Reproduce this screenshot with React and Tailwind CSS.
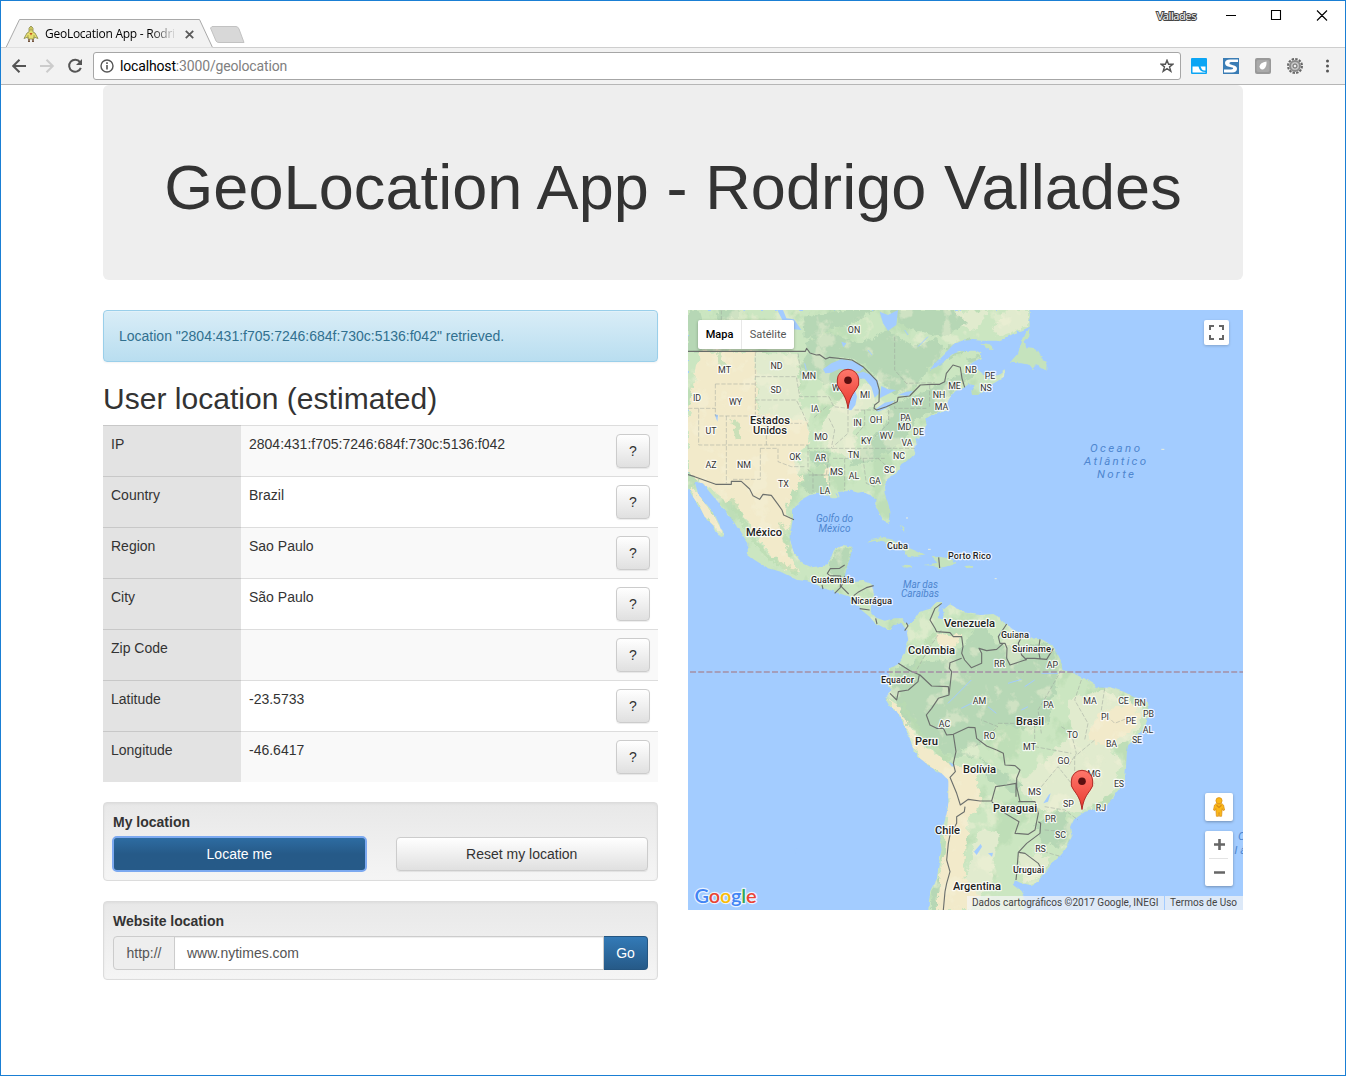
import React from "react";

const rows = [
  ["IP", "2804:431:f705:7246:684f:730c:5136:f042"],
  ["Country", "Brazil"],
  ["Region", "Sao Paulo"],
  ["City", "São Paulo"],
  ["Zip Code", ""],
  ["Latitude", "-23.5733"],
  ["Longitude", "-46.6417"],
];

// Each entry: label, centre x, baseline y (map pixels)
const states = [
  ["ON", 166, 22.5], ["MT", 36.5, 62.5], ["ND", 88.5, 58.5], ["MN", 121, 68.5], ["SD", 88, 82.5],
  ["ID", 9, 90.5], ["WY", 47.5, 94.5], ["WI", 149, 80.5], ["MI", 177, 87.5], ["IA", 127, 101.5],
  ["NB", 283, 62.5], ["PE", 302, 68.5], ["NS", 298, 80.5], ["ME", 266.5, 78.5], ["NH", 251, 87.5],
  ["NY", 229.5, 94.5], ["MA", 253.5, 99.5], ["UT", 23, 123.5], ["IN", 169.5, 115.5], ["OH", 188, 112.5],
  ["PA", 217.5, 110.5], ["MD", 216.5, 119.5], ["DE", 230.5, 124.5], ["MO", 133, 129.5], ["KY", 178.5, 133.5],
  ["WV", 198.5, 128.5], ["VA", 219, 135.5], ["AZ", 23, 157.5], ["NM", 56, 157.5], ["OK", 107, 149.5],
  ["AR", 132.5, 150.5], ["TN", 165.5, 147.5], ["NC", 211, 148.5], ["MS", 148.5, 164.5], ["AL", 166, 168.5],
  ["SC", 201.5, 162.5], ["GA", 187, 173.5], ["TX", 95.5, 176.5], ["LA", 137, 183.5],
  ["RR", 311.5, 356.5], ["AP", 364.5, 357.5], ["AM", 291.5, 393.5], ["PA", 360.5, 397.5], ["MA", 402, 393.5],
  ["CE", 435.5, 393.5], ["RN", 452, 395.5], ["PI", 417, 409.5], ["PB", 460.5, 406.5], ["PE", 443, 413.5],
  ["AL", 460, 422.5], ["SE", 449, 432.5], ["AC", 256.5, 416.5], ["RO", 301.5, 428.5], ["TO", 384.5, 427.5],
  ["MT", 341.5, 439.5], ["BA", 423.5, 436.5], ["GO", 375.5, 453.5], ["MG", 406, 466.5], ["ES", 431, 476.5],
  ["MS", 346.5, 484.5], ["SP", 380.5, 496.5], ["RJ", 413, 500.5], ["PR", 362.5, 511.5], ["SC", 372.5, 527.5], ["RS", 352.5, 541.5],
];

// label, centre x, baseline y, rendered width, font size
const countries = [
  ["Estados", 82, 114, 40, 11.2], ["Unidos", 82, 124, 34, 11.2], ["México", 76, 226, 36, 11.2],
  ["Cuba", 209.5, 239, 21, 9.3], ["Porto Rico", 281.5, 249, 43, 9.3], ["Guatemala", 144.5, 273, 43, 9.3],
  ["Nicarágua", 183.5, 294, 41, 9.3], ["Venezuela", 281.5, 317, 51, 11.2], ["Guiana", 327, 328, 28, 9.3],
  ["Suriname", 343.5, 342, 39, 9.3], ["Colômbia", 243.5, 344, 47, 11.2], ["Equador", 209.5, 373, 33, 9.3],
  ["Brasil", 342, 415, 28, 11.2], ["Peru", 238.5, 435, 23, 11.2], ["Bolívia", 291.5, 463, 33, 11.2],
  ["Paraguai", 327, 502, 44, 11.2], ["Chile", 259.5, 524, 25, 11.2], ["Uruguai", 340.5, 563, 31, 9.3],
  ["Argentina", 289, 580, 48, 11.2],
];

const seas = [
  ["Golfo do", 146.5, 211.5, 37, 10], ["México", 146.5, 221.5, 32, 10],
  ["Mar das", 232.5, 277.5, 35, 10], ["Caraíbas", 232, 286.5, 38, 10],
  ["Oceano", 427, 142, 50, 11.5], ["Atlântico", 427, 155, 62, 11.5], ["Norte", 427.5, 168, 37, 11.5],
  ["O", 554, 530, 8, 11.5], ["lân", 557, 544, 21, 11.5],
];

const LAND =
  "M0 0H1025V50L1005 60 975 72 950 85 930 92 880 92 850 90 822 92 800 100 770 130 740 160 725 180 745 172 780 145 800 130 830 122 865 122 880 130 878 145 850 158 835 172 865 175 885 192 905 205 935 192 950 180 948 200 925 215 900 230 870 255 852 254 850 243 860 226 843 222 825 235 800 245 785 265 775 285 785 300 770 303 745 312 712 325 715 340 700 370 692 390 685 380 688 400 680 415 685 430 665 450 640 465 625 490 600 505 588 530 590 550 600 580 607 605 605 635 597 640 580 620 565 590 565 570 545 555 525 545 510 548 490 542 450 546 455 562 435 562 420 555 395 550 365 555 345 566 335 572 315 600 315 628 308 660 308 700 320 735 345 760 370 772 400 768 420 762 432 735 440 715 465 708 495 713 488 740 478 765 472 790 468 808 490 815 520 810 555 825 556 850 550 880 548 905 565 923 590 932 620 925 645 925 660 945 676 935 696 905 731 895 746 876 761 876 752 896 750 925 768 928 765 900 786 883 816 900 836 910 876 915 916 912 931 920 941 935 966 950 996 975 1026 985 1061 988 1091 1005 1104 1025 1121 1060 1123 1080 1156 1090 1196 1110 1226 1130 1266 1132 1306 1145 1346 1165 1376 1175 1384 1210 1371 1250 1346 1280 1321 1305 1316 1330 1314 1370 1311 1410 1296 1430 1281 1450 1266 1475 1246 1495 1216 1500 1191 1505 1156 1530 1146 1550 1151 1580 1136 1610 1116 1635 1091 1660 1066 1690 1051 1715 1026 1725 996 1718 981 1710 976 1725 1006 1750 1011 1770 1006 1800H721L723 1770 731 1740 746 1710 751 1670 761 1620 756 1580 771 1530 781 1480 781 1410 761 1390 726 1370 696 1345 676 1320 671 1300 656 1265 636 1215 606 1190 591 1165 601 1150 611 1140 600 1125 604 1100 606 1075 631 1060 651 1030 661 990 656 962 640 938 618 945 606 960 585 952 560 938 545 920 520 900 510 888 490 865 478 858 440 845 405 835 370 815 330 810 290 790 240 775 200 750 180 735 178 700 165 680 140 640 110 600 80 565 60 540 45 520 20 515 30 550 50 580 75 610 95 650 108 668 106 682 90 675 75 645 50 620 35 590 15 560 0 535Z";

const ISLANDS = [
  "M965 158 990 130 1000 100 1015 65 1028 57 1025 75 1010 95 1015 115 1045 118 1055 135 1062 150 1076 155 1075 180 1058 178 1050 162 1035 178 1025 165 1000 160Z",
  "M535 698 550 686 580 682 615 690 640 705 665 715 690 725 712 735 690 740 660 738 650 722 610 712 590 697 560 693Z",
  "M728 742 755 740 785 745 808 760 780 768 755 775 735 768 710 765 745 758Z",
  "M830 768 855 766 855 773 832 774Z",
  "M640 767 665 768 673 773 655 776Z",
  "M880 98 905 103 921 118 905 120Z",
  "M638 645 652 655 651 667 643 655Z",
];

const FOREST = [
  "M355 95 430 70 520 100 600 60 680 110 740 85 770 120 720 180 690 225 620 250 575 210 530 165 470 145 420 145 365 130Z",
  "M345 20 470 0H560L500 40 430 55 380 90 350 80Z M610 0H800L840 40 760 80 680 60 630 40Z",
  "M0 0H35L60 90 40 125H0Z M85 0H150V28H90Z",
  "M360 130 470 150 540 190 520 210 470 200 440 230 370 200 340 165Z",
  "M600 290 730 235 800 200 830 185 860 190 780 260 740 310 690 325 640 400 560 450 490 470 500 430 570 370 600 330Z",
  "M345 490 410 500 430 550 370 552 340 530Z M360 420 430 425 420 470 370 460Z",
  "M430 750 445 715 492 715 470 800 425 810Z",
  "M770 110 850 85 840 120 780 145Z M830 150 880 140 860 170Z",
  "M625 1075 680 1055 780 1050 830 1000 870 950 900 960 920 1000 1000 1010 1080 1000 1115 1070 1100 1150 1080 1240 1010 1260 930 1240 880 1300 800 1320 720 1300 650 1230 610 1140Z",
  "M650 1270 720 1300 800 1310 870 1340 950 1390 1000 1420 980 1450 900 1410 880 1340 790 1340 740 1310Z",
  "M1090 1510 1130 1500 1150 1560 1120 1610 1060 1600 1040 1540Z",
  "M720 1800 735 1740 755 1690 750 1760 745 1800Z",
];

const PALE = [
  "M35 125 200 125 210 310 360 340 360 405 310 440 340 500 290 600 310 630 290 680 300 740 340 790 290 780 220 700 190 640 140 590 60 535 0 490V320L20 200Z",
  "M15 535 45 570 80 620 105 672 80 650 40 600 10 560Z",
  "M596 1160 640 1195 690 1290 780 1360 860 1370 880 1480 840 1530 830 1700 870 1750 850 1800H745L752 1720 770 1610 780 1490 776 1410 690 1340 660 1260Z",
  "M1230 1210 1330 1180 1360 1220 1330 1260 1260 1310 1200 1290Z",
  "M415 460 432 470 415 540 400 535Z",
  "M925 1003 958 1003 955 1040 935 1035Z",
  "M745 968 820 975 805 1005 760 1015Z",
];

const MEADOW = [
  "M200 128 330 132 340 300 365 350 360 405 325 440 340 500 290 590 300 480 240 440 215 330Z",
  "M720 5 900 0 870 60 790 50Z M960 0H1020V50L930 80 910 50Z",
  "M1040 1380 1150 1270 1250 1300 1300 1360 1280 1440 1180 1510 1060 1500 990 1430Z",
  "M1140 1170 1240 1140 1370 1200 1340 1280 1240 1330 1150 1280Z",
  "M870 1560 930 1570 910 1710 870 1770 830 1720Z",
  "M990 1630 1090 1640 1070 1690 1010 1720Z",
  "M520 230 560 220 560 290 500 310 500 450 430 420 400 360 430 290Z",
];

const BORDERS = [
  "M0 124H352L356 115 366 129 385 135 395 134 413 147 425 142 470 147 492 150 525 170 545 190 566 212 574 240 573 275 560 285 558 295 566 300 595 290 628 275 630 262 665 258 697 225 730 223H755L770 215 775 190 795 165 817 172 822 205 830 232",
  "M0 494 20 500 83 523H130V514H160L185 537 195 557 215 568 225 553 250 556 270 583 282 600 287 615 318 629",
  "M470 765 455 775 427 776 418 790 425 797 458 798 457 833 440 850 M470 798 460 830 482 852 M402 825 405 837 M557 827 535 833 510 847 497 857 M515 896 545 900 M563 925 567 942 M655 938 660 948 650 962",
  "M761 880 741 895 726 930 741 955 746 965 786 968 796 980 821 980 825 1010 821 1030 830 1050 850 1073 881 1060 881 1030 873 1015 896 1022 926 1018 946 1000",
  "M956 942 931 980 936 1000 951 1000 957 1015 956 1045 966 1065 1011 1050 1016 1045 1040 1045 1076 1048 1096 1015 M1016 1050 1001 1035 991 1000 1001 980 M1056 1045 1051 1020 1056 988",
  "M821 1045 786 1058 784 1075 791 1085 783 1155 751 1165 731 1195 715 1215 726 1245 746 1255 766 1255 776 1275 796 1273 841 1252 861 1253 866 1285 896 1308 926 1320 M631 1060 666 1082 696 1095 731 1128 781 1130 783 1155 M694 1093 690 1115 661 1140 631 1145 626 1170 606 1150",
  "M796 1273 804 1325 796 1360 802 1385 786 1402 806 1450 817 1485 841 1468 876 1473 911 1473 923 1430 956 1425 984 1420 984 1460 M926 1320 946 1330 951 1365 981 1367 996 1380 986 1405 986 1430 996 1475",
  "M831 1490 829 1505 806 1520 806 1540 786 1575 781 1600 776 1650 786 1685 776 1720 771 1745 766 1800 M911 1475 951 1510 993 1535 981 1570 1021 1573 1041 1560 1051 1510 1041 1475 991 1475 M1051 1535 1058 1540 1056 1570 1016 1600 991 1627 986 1690 984 1710 M993 1627 1011 1630 1051 1660 1066 1690",
  "M752 742 755 774",
];

const DIVISIONS =
  "M100 0V55M202 125V318M202 200H325L335 260H423M82 222H202M82 222V318H235V405M32 295V405H360M0 295H82M115 318V520M217 415V508H130M217 415H270V455L310 470H350M202 270H325L345 310 362 350M360 405V480L375 490V545M265 340H340M360 415H435M423 260 437 290 480 295M423 325 440 360 430 415M480 300V370L435 410M530 300V345L500 380M500 300H560M602 300V340L560 380M620 270V295H715M435 415H680M435 445H590M422 445 415 495H360M470 445V540M525 445 535 520 560 530M375 495H425V530M570 445 620 490M725 225V290M620 80V180L655 220 740 218M330 130 340 200M415 290 375 325M1120 1080 1080 1150 1050 1200 1060 1270M930 1240H1040V1310L1150 1330M1120 1250 1150 1270 1165 1330 1140 1370M1180 1110 1160 1170 1200 1240 1190 1290M1250 1135 1240 1200 1280 1240 1330 1220M1220 1290 1160 1340 1160 1400 1220 1420M1060 1430 1110 1370 1150 1420 1200 1430M1070 1490 1130 1500 1170 1530M1070 1560 1140 1565M1050 1620 1120 1640M760 960 720 1020 680 1090M860 1310 930 1250 880 1230";

const LAKES = [
  "M405 178 430 160 460 148 495 153 528 172 515 185 485 180 455 176 430 188 412 190Z",
  "M482 300 477 270 484 232 500 210 515 202 498 230 507 260 502 285 490 301Z",
  "M525 185 550 195 570 212 573 250 560 263 550 230 530 206 510 205 495 195Z",
  "M562 298 590 278 620 272 595 295 570 305Z",
  "M580 228 600 238 625 240 600 252 575 265Z",
  "M630 255 655 245 675 243 660 258Z",
  "M575 5 600 15 630 0 625 45 600 62 585 40Z",
  "M268 0 285 0 295 25 318 28 340 60 318 58 310 40 288 40Z",
  "M318 1620 330 1610 322 1632Z",
  "M858 1625 878 1602 882 1610 866 1635Z M900 1630 915 1628 912 1640Z",
  "M783 1355 800 1365 792 1371Z",
  "M460 95 475 100 466 112Z M985 60 1000 70 990 77Z",
  "M80 313 90 315 88 335Z M1088 1450 1080 1475 1066 1480 1082 1455Z",
];

function Pin({ x, y }) {
  return (
    <g transform={`translate(${x} ${y})`}>
      <path d="M0 0C-1.4-10-4.6-14.5-8.2-19.3A10.7 10.7 0 0 1-10.7-28.5 10.7 10.7 0 0 1 10.7-28.5 10.7 10.7 0 0 1 8.2-19.3C4.6-14.5 1.4-10 0 0Z" fill="url(#pin)" stroke="#b02a25" strokeWidth="1" />
      <circle cx="0" cy="-28.3" r="3.8" fill="#5a0f10" />
    </g>
  );
}

function GeoMap() {
  return (
    <div className="relative h-[600px] w-[555px] overflow-hidden bg-[#a3ccff] font-['Roboto',sans-serif]">
      <svg className="block" width="555" height="600" viewBox="0 0 555 600">
        <defs>
          <linearGradient id="pin" x1="0" y1="0" x2="0" y2="1">
            <stop offset="0" stopColor="#ff776b" />
            <stop offset="1" stopColor="#e8392f" />
          </linearGradient>
          <clipPath id="landClip"><path d={LAND} /></clipPath>
          <filter id="coast" x="-5%" y="-5%" width="110%" height="110%" colorInterpolationFilters="sRGB">
            <feTurbulence type="fractalNoise" baseFrequency="0.12" numOctaves="3" seed="4" />
            <feDisplacementMap in="SourceGraphic" scale="4" xChannelSelector="R" yChannelSelector="G" />
          </filter>
          <filter id="rough" x="-20%" y="-20%" width="140%" height="140%" colorInterpolationFilters="sRGB">
            <feTurbulence type="fractalNoise" baseFrequency="0.05" numOctaves="4" seed="9" />
            <feDisplacementMap in="SourceGraphic" scale="26" xChannelSelector="R" yChannelSelector="G" />
          </filter>
          <filter id="reliefDark" x="0" y="0" width="100%" height="100%" colorInterpolationFilters="sRGB">
            <feTurbulence type="fractalNoise" baseFrequency="0.011 0.009" numOctaves="5" seed="21" />
            <feColorMatrix values="0 0 0 0 0.69  0 0 0 0 0.84  0 0 0 0 0.67  0 9 0 0 -4.9" />
          </filter>
          <filter id="reliefLight" x="0" y="0" width="100%" height="100%" colorInterpolationFilters="sRGB">
            <feTurbulence type="fractalNoise" baseFrequency="0.016" numOctaves="5" seed="33" />
            <feColorMatrix values="0 0 0 0 0.96  0 0 0 0 0.95  0 0 0 0 0.85  9 0 0 0 -5.2" />
          </filter>
        </defs>
        <g filter="url(#coast)">
          <g transform="scale(0.333333)">
            <path d={LAND} fill="#cbe6c1" />
            {ISLANDS.map((d) => <path key={d} d={d} fill="#c5e3bd" />)}
          </g>
        </g>
        <g transform="scale(0.333333)">
          <g clipPath="url(#landClip)">
            <rect width="1665" height="1800" filter="url(#reliefDark)" opacity="0.45" />
            <g filter="url(#rough)">
              {MEADOW.map((d) => <path key={d} d={d} fill="#e1ebce" />)}
              {PALE.map((d) => <path key={d} d={d} fill="#f2eaca" />)}
              {FOREST.map((d) => <path key={d} d={d} fill="#b6d7b5" />)}
            </g>
            <rect width="1665" height="1800" filter="url(#reliefLight)" opacity="0.4" />
            <path d="M130 570 190 680 240 740 330 790M280 640 310 740M90 130 110 180M660 1130 720 1000 740 970M640 1180 700 1280 780 1350M140 330 150 390" fill="none" stroke="#b9dcb1" strokeWidth="14" opacity="0.7" filter="url(#rough)" />
          </g>
          <g fill="#a3ccff">
            {LAKES.map((d) => <path key={d} d={d} />)}
          </g>
          <path d="M1010 1130 1040 1110M900 1190 925 1210M780 1180 850 1110M960 1120 1000 1108M1060 1090 1110 1090M1000 1200 1020 1190M820 1195 860 1175M350 160 355 180M690 110 720 80M540 120 552 135M650 60 660 75M450 560 444 550" stroke="#a3ccff" strokeWidth="3" fill="none" />
          <path d="M1420 418h9M654 624h6M720 718h8M920 806h6" stroke="#eef1dc" strokeWidth="3" />
          <path d={DIVISIONS} fill="none" stroke="#9aa09a" strokeWidth="2.4" strokeDasharray="13 5" opacity="0.6" />
          <g fill="none" stroke="#6c706d" strokeWidth="3.4" strokeLinejoin="round">
            {BORDERS.map((d) => <path key={d} d={d} />)}
          </g>
        </g>
        <path d="M2 362H555" stroke="#a58fa5" strokeWidth="1.6" strokeDasharray="6 2.2" />
        <g textAnchor="middle" fill="#333" stroke="#fff" strokeOpacity="0.8" strokeWidth="2.4" strokeLinejoin="round" style={{ paintOrder: "stroke" }}>
          <g fontSize="8.8">
            {states.map(([t, x, y], i) => <text key={i} x={x} y={y}>{t}</text>)}
          </g>
          <g fontWeight="500" fill="#222">
            {countries.map(([t, x, y, w, s]) => <text key={t + y} x={x} y={y} textLength={w} fontSize={s}>{t}</text>)}
          </g>
        </g>
        <g fill="#4e86cf" fontStyle="italic">
          {seas.map(([t, x, y, w, s]) => (
            <text key={t + y} x={x - w / 2} y={y} textLength={w} fontSize={s}>{t}</text>
          ))}
        </g>
        <Pin x={160} y={98.5} />
        <Pin x={394} y={499.5} />
        <text x="6.5" y="593" textLength="62" fontSize="20" fontFamily="Lato, sans-serif" fontWeight="600" stroke="#fff" strokeOpacity="0.75" strokeWidth="2.5" strokeLinejoin="round" style={{ paintOrder: "stroke" }}>
          <tspan fill="#4285f4">G</tspan><tspan fill="#ea4335">o</tspan><tspan fill="#fbbc05">o</tspan><tspan fill="#4285f4">g</tspan><tspan fill="#34a853">l</tspan><tspan fill="#ea4335">e</tspan>
        </text>
      </svg>
      <div className="absolute left-[10px] top-[10px] flex h-[29px] rounded-[2px] bg-white text-[11px] leading-[29px] shadow-[0_1px_3px_rgba(0,0,0,0.3)]">
        <div className="w-[43px] text-center font-medium text-black">Mapa</div>
        <div className="w-[53px] border-l border-[#e8e8e8] text-center text-[#565656]">Satélite</div>
      </div>
      <div className="absolute right-[14px] top-[10px] flex size-[25px] items-center justify-center rounded-[2px] bg-white shadow-[0_1px_3px_rgba(0,0,0,0.2)]">
        <svg width="15" height="15" viewBox="0 0 15 15" fill="none" stroke="#666" strokeWidth="2"><path d="M1 5V1H5M10 1H14V5M14 10V14H10M5 14H1V10" /></svg>
      </div>
      <div className="absolute left-[517px] top-[483px] flex size-7 items-center justify-center rounded-[2px] bg-white shadow-[0_1px_3px_rgba(0,0,0,0.3)]">
        <svg width="12" height="20" viewBox="0 0 12 20">
          <path d="M1.5 8 3 6.7H9L10.5 8 11.6 13 10 13.5 9.2 11.5 8.6 19.3H6.5L6 15.5 5.5 19.3H3.4L2.8 11.5 2 13.5.5 13Z" fill="#fbb818" stroke="#d78b16" strokeWidth=".7" />
          <path d="M3.5 8.2 6 10.5 8.5 8.2" stroke="#d78b16" fill="none" strokeWidth="1.2" />
          <circle cx="6" cy="3.7" r="3.1" fill="#fbb818" stroke="#d78b16" strokeWidth=".7" />
        </svg>
      </div>
      <div className="absolute left-[517px] top-[521px] flex h-[55px] w-7 flex-col items-center rounded-[2px] bg-white shadow-[0_1px_3px_rgba(0,0,0,0.3)]">
        <svg width="28" height="55" viewBox="0 0 28 55"><path d="M9 13.5H20M14.5 8V19M9 41.5H20" stroke="#666" strokeWidth="2.6" /><path d="M4 27.5H23" stroke="#e3e3e3" /></svg>
      </div>
      <div className="absolute bottom-0 right-0 flex h-[14px] items-center whitespace-nowrap bg-[#f5f5f5]/70 text-[10px] text-[#444]">
        <span className="w-[197px] pl-[5px]">Dados cartográficos ©2017 Google, INEGI</span>
        <span className="h-full w-px bg-[#a3ccff]" />
        <span className="w-[78px] pl-[5px]">Termos de Uso</span>
      </div>
    </div>
  );
}

function Browser() {
  return (
    <header className="h-[84px] shrink-0 border-b border-[#b6b6b6]">
      <div className="relative flex h-[46px] justify-between bg-white">
        <svg className="absolute left-0 top-0" width="1344" height="47" viewBox="1 1 1344 47">
          <path d="M1 48V47.5H6L19.5 19.5H199.5L212.5 47.5H1345V48Z" fill="#f2f2f2" stroke="#a9a9a9" />
          <path d="M1 48H1345" stroke="#f2f2f2" />
          <path d="M212 26.5H236Q238 26.5 239 29L244 42.5H219Q217 42.5 216 41L210.5 28Z" fill="#d8d8d8" stroke="#c2c2c2" />
        </svg>
        <div className="relative flex items-center pl-[22px] pt-[20px]">
          <svg width="16" height="16" viewBox="0 0 16 16">
            <path d="M6 2 8 0 10 2V6L12 7 15 12.5 11 11V13H5V11L1 12.5 4 7 6 6Z" fill="#e6df70" stroke="#88884c" strokeWidth=".8" />
            <path d="M6 13V15.5M10 13V15.5M5 15.5H7M9 15.5H11" stroke="#74553e" strokeWidth="1.4" />
            <path d="M6.5 7 8 9.5 9.5 7Z" fill="#c35525" /><path d="M8 1V4M6 4H10M5 9V12M11 9V12" stroke="#9c9a48" strokeWidth=".8" />
          </svg>
          <span className="ml-[6px] w-[132px] overflow-hidden whitespace-nowrap bg-gradient-to-r from-black from-80% to-transparent bg-clip-text font-['Open_Sans',sans-serif] text-[12px] leading-4 tracking-[-0.26px] text-transparent">GeoLocation App - Rodri</span>
          <svg className="ml-[8px]" width="9" height="9" viewBox="0 0 9 9" stroke="#5a5a5a" strokeWidth="1.8"><path d="M.8.8 8.2 8.2M8.2.8.8 8.2" /></svg>
        </div>
        <div className="relative flex h-[28px] items-center">
          <span className="mr-[30px] mt-[2px] font-['Open_Sans',sans-serif] text-[11px] leading-4 tracking-[-0.4px] text-white [paint-order:stroke] [-webkit-text-stroke:2px_#444]">Vallades</span>
          <svg width="102" height="11" viewBox="0 0 102 11" fill="none" stroke="#000"><path d="M0 5.5H10M45.5.5H54.5V9.5H45.5ZM91 .5 101 10.5M101 .5 91 10.5" strokeWidth="1.1" /></svg>
          <span className="w-[17px]" />
        </div>
      </div>
      <div className="flex h-[37px] items-center bg-[#f2f2f2] pl-[11px]">
        <svg width="72" height="16" viewBox="0 0 72 16" fill="none" strokeWidth="2">
          <path d="M14 8H1.5M7.5 1.7 1.2 8 7.5 14.3" stroke="#555" />
          <path d="M28 8H40.5M34.5 1.7 40.8 8 34.5 14.3" stroke="#ccc" />
          <path d="M68 4.2A6 6 0 1 0 68.8 9.8" stroke="#555" /><path d="M70 1V7H64Z" fill="#555" />
        </svg>
        <div className="ml-[9px] flex h-[28px] w-[1088px] items-center rounded-[3px] border border-[#a6a6a6] bg-white px-[6px]">
          <svg width="14" height="14" viewBox="0 0 14 14" fill="none" stroke="#555"><circle cx="7" cy="7" r="6" strokeWidth="1.4" /><path d="M7 6V10.5M7 3.3V5" strokeWidth="1.6" /></svg>
          <span className="ml-[6px] font-['Roboto',sans-serif] text-[14px] leading-5 tracking-[-0.16px] text-[#808080]"><span className="text-black">localhost</span>:3000/geolocation</span>
          <svg className="ml-auto" width="14" height="14" viewBox="0 0 16 16" fill="none" stroke="#555" strokeWidth="1.6"><path d="M8 1.4 9.8 6H14.8L10.9 9 12.4 14 8 11 3.6 14 5.1 9 1.2 6H6.2Z" /></svg>
        </div>
        <div className="ml-[10px] flex items-center gap-4">
          <svg width="16" height="16" viewBox="0 0 16 16"><rect width="16" height="16" rx="1" fill="#0ba5f4" /><path d="M1.5 8.5H7.5Q8.5 14 14.5 14V14.5H1.5ZM9.5 8.5H14.5V12.5Q11 12.5 10.5 10.5Z" fill="#fff" /></svg>
          <svg width="16" height="16" viewBox="0 0 16 16"><rect width="16" height="16" fill="#3b7db5" /><path d="M15 4V1.5H7Q2 1.5 2 5 2 8 6 8.8L10 9.8Q10.5 11.5 8 11.5H1V14.5H9Q14 14.5 14 10.8 14 8 10 7.2L6.5 6Q6 4 8 4Z" fill="#fff" /></svg>
          <svg width="16" height="16" viewBox="0 0 16 16"><rect width="16" height="16" rx="2" fill="#999" /><rect x="1.5" y="2" width="13" height="12" rx="2" fill="#aaa" /><path d="M11.5 3.5Q12 9 8.5 11.3 5 12 4.5 8.5 5 4.5 11.5 3.5Z" fill="#fff" /></svg>
          <svg width="16" height="16" viewBox="0 0 16 16" fill="none"><circle cx="8" cy="8" r="7" stroke="#666" strokeWidth="2" strokeDasharray="2.4 1.27" /><circle cx="8" cy="8" r="5" fill="#c4c4c4" stroke="#8b8b8b" strokeWidth="2" /><circle cx="8" cy="8" r="2" fill="#eee" stroke="#666" /></svg>
          <svg width="16" height="16" viewBox="0 0 16 16" fill="#555"><circle cx="8.5" cy="3" r="1.5" /><circle cx="8.5" cy="8" r="1.5" /><circle cx="8.5" cy="13" r="1.5" /></svg>
        </div>
      </div>
    </header>
  );
}

const well = "h-[79px] rounded-[4px] border border-[#dcdcdc] bg-gradient-to-b from-[#e8e8e8] to-[#f5f5f5] p-[9px] shadow-[inset_0_1px_3px_rgba(0,0,0,0.05)]";
const btn = "flex h-[34px] items-center justify-center rounded-[4px] border border-[#ccc] bg-gradient-to-b from-white to-[#e0e0e0] shadow-[inset_0_1px_0_rgba(255,255,255,0.15),0_1px_1px_rgba(0,0,0,0.075)]";

export default function App() {
  return (
    <div className="flex h-[1076px] w-[1346px] flex-col overflow-hidden border border-[#1a7fd4] bg-white font-['Liberation_Sans',Arial,sans-serif] text-[14px] leading-5 text-[#333]">
      <Browser />
      <main className="ml-[102px] w-[1140px]">
        <div className="flex h-[195px] justify-center rounded-[6px] bg-[#eee] pt-[68px]">
          <h1 className="text-[63px] font-normal leading-[69px] tracking-[0.09px]">GeoLocation App - Rodrigo Vallades</h1>
        </div>
        <div className="mt-[30px] grid grid-cols-2 items-start gap-[30px]">
          <section>
            <div className="rounded-[4px] border border-[#9acfea] bg-gradient-to-b from-[#d9edf7] to-[#b9def0] p-[15px] text-[#31708f] shadow-[inset_0_1px_0_rgba(255,255,255,0.25),0_1px_2px_rgba(0,0,0,0.05)]">Location "2804:431:f705:7246:684f:730c:5136:f042" retrieved.</div>
            <h2 className="mb-[10px] mt-5 text-[30px] leading-[33px] tracking-[0.03px]">User location (estimated)</h2>
            <div>
              {rows.map(([k, v]) => (
                <div key={k} className="flex h-[51px] bg-white odd:bg-[#f9f9f9]">
                  <div className="w-[138px] border-t border-[#c8c8c8] bg-[#e3e3e3] p-2">{k}</div>
                  <div className="flex flex-1 justify-between border-t border-[#ddd] p-2">
                    <span>{v}</span>
                    <button className={`${btn} w-[34px]`}>?</button>
                  </div>
                </div>
              ))}
            </div>
            <div className={`${well} mt-5`}>
              <div className="mb-[5px] font-bold">My location</div>
              <div className="grid grid-cols-2 gap-[30px]">
                <button className="flex h-[34px] items-center justify-center rounded-[4px] border border-[#245580] bg-gradient-to-b from-[#2d6ca2] to-[#265a88] to-50% text-white outline-2 outline-[#7ca9f0] -outline-offset-1">Locate me</button>
                <button className={btn}>Reset my location</button>
              </div>
            </div>
            <div className={`${well} mt-5`}>
              <div className="mb-[5px] font-bold">Website location</div>
              <div className="flex h-[34px]">
                <span className="flex w-[62px] items-center justify-center rounded-l-[4px] border border-[#ccc] bg-[#eee] text-[#555]">http://</span>
                <span className="-ml-px flex flex-1 items-center border border-[#ccc] bg-white px-3 text-[#555] shadow-[inset_0_1px_1px_rgba(0,0,0,0.075)]">www.nytimes.com</span>
                <button className="flex w-[44px] items-center justify-center rounded-r-[4px] border border-l-0 border-[#245580] bg-gradient-to-b from-[#337ab7] to-[#265a88] text-white">Go</button>
              </div>
            </div>
          </section>
          <GeoMap />
        </div>
      </main>
    </div>
  );
}
